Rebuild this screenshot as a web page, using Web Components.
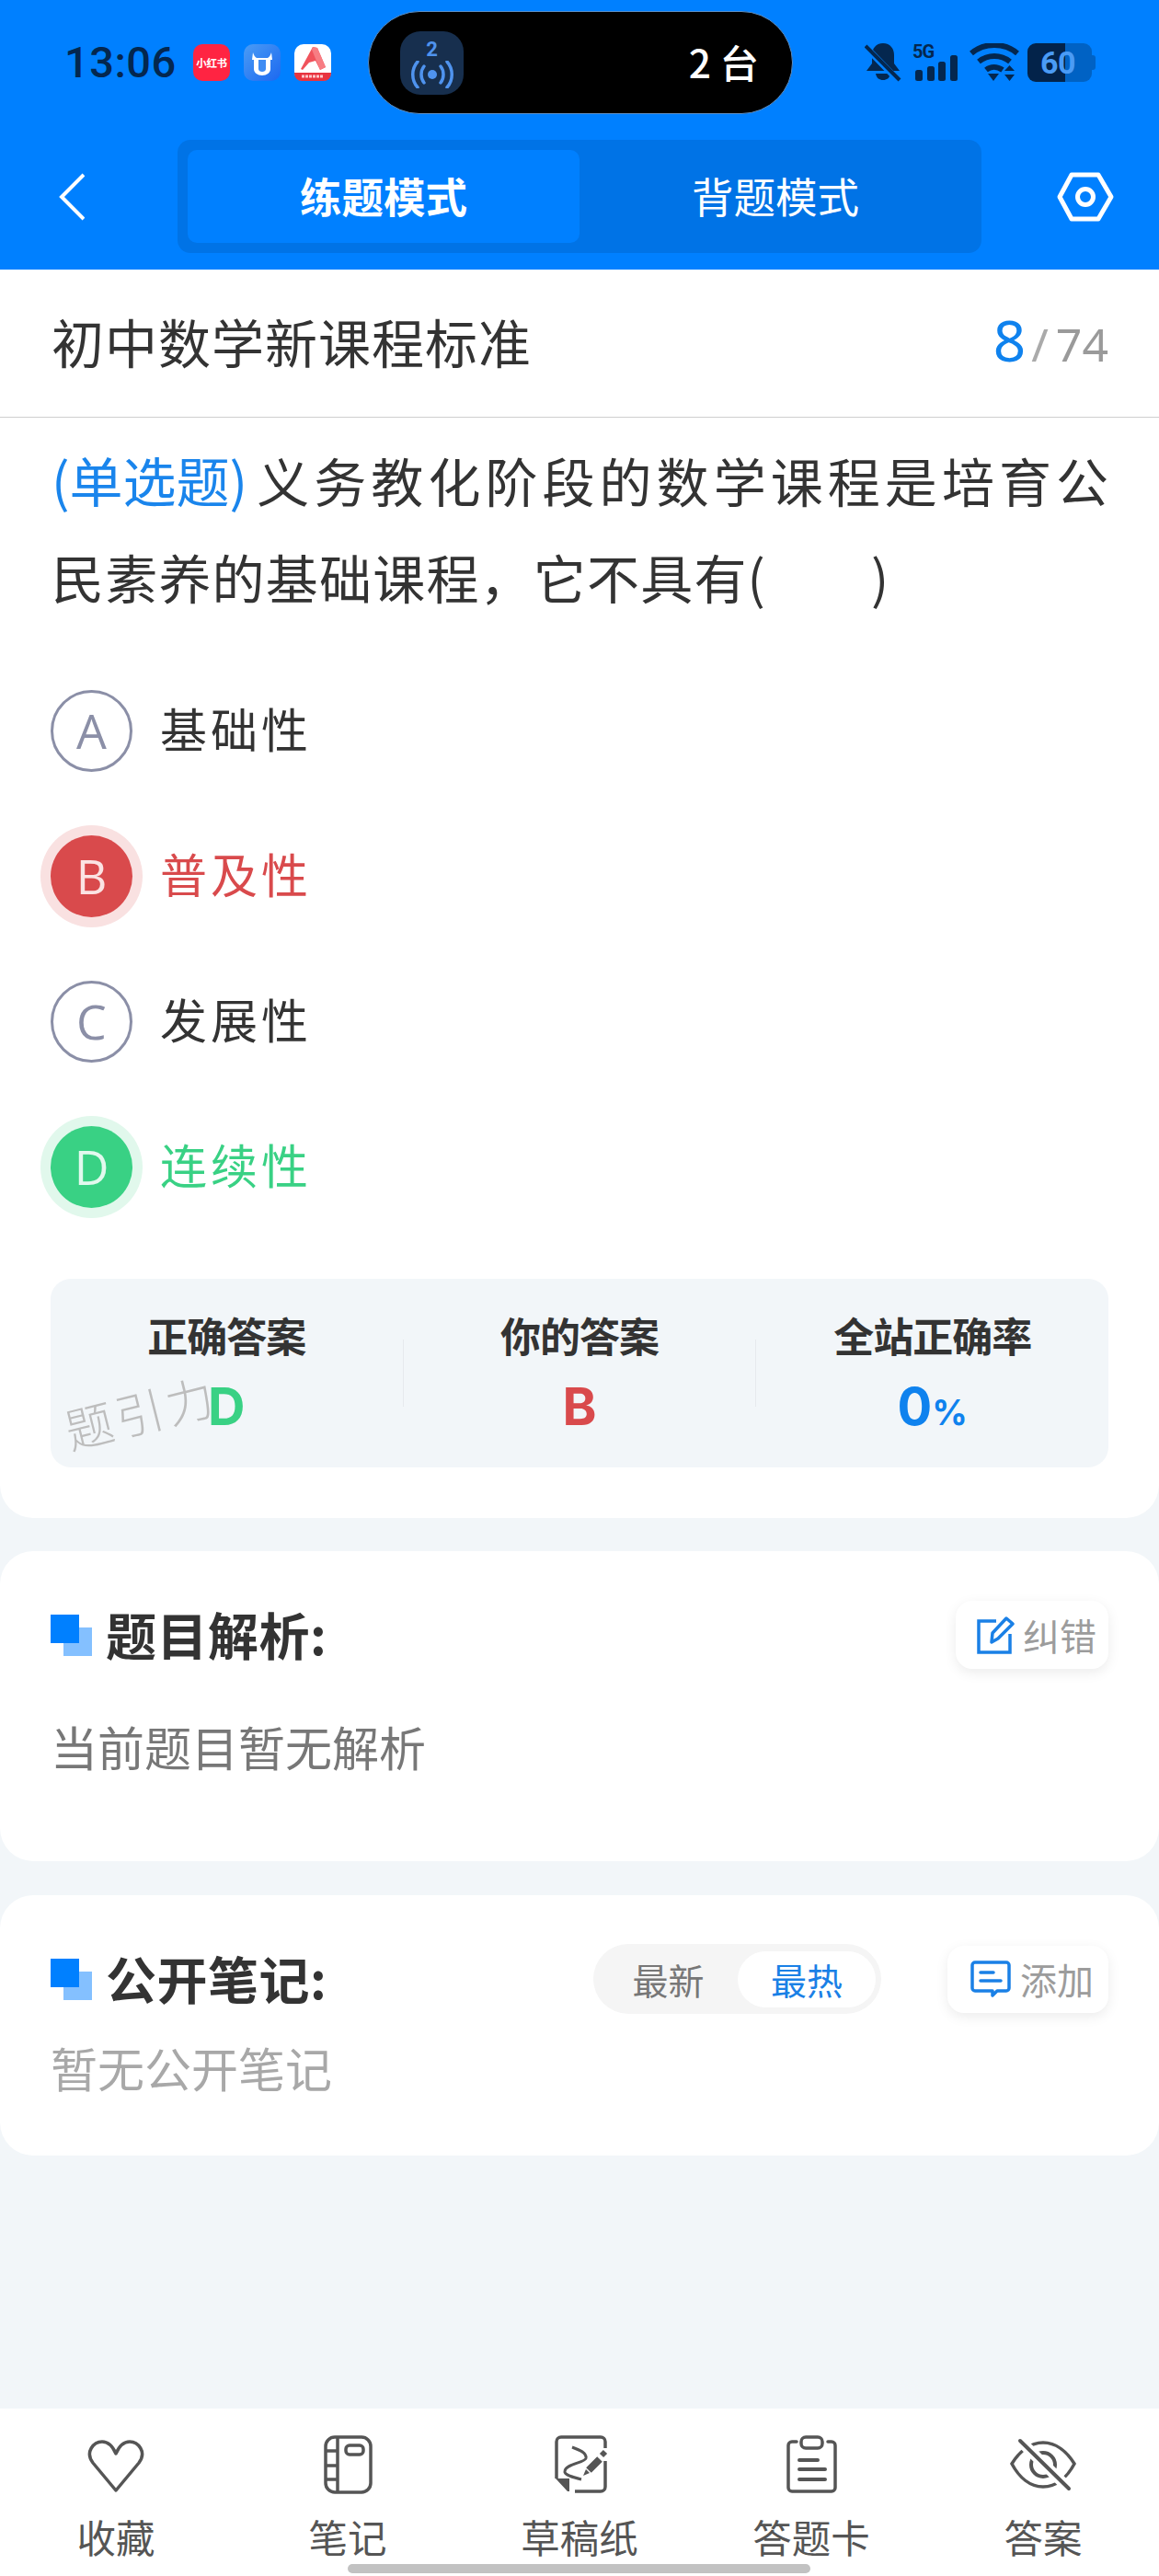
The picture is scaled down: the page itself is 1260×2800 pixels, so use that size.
<!DOCTYPE html>
<html lang="zh-CN"><head><meta charset="utf-8"><title>题目</title>
<style>
html,body{margin:0;padding:0;background:#f2f6f9}
body{font-family:"Noto Sans CJK SC","Noto Sans",sans-serif;color:#333}
</style></head>
<body>
<quiz-app></quiz-app>
<script>
function def(name, css, html, setup){
  customElements.define(name, class extends HTMLElement{
    connectedCallback(){
      if(this.shadowRoot) return;
      const r=this.attachShadow({mode:'open'});
      r.innerHTML='<style>'+css+'</style>'+(typeof html==='function'?html(this):html);
    }
  });
}
const CJK='"Noto Sans CJK SC","Noto Sans",sans-serif';

def('status-bar',`
:host{display:flex;align-items:center;height:137px;box-sizing:border-box;padding:0 0 1px 70px;color:#04274f;font-family:${CJK}}
.time{font:500 47px/60px Roboto,sans-serif;width:120px;letter-spacing:.5px;margin-right:20px;white-space:nowrap}
.apps{display:flex;gap:15px;margin-right:40px}
.apps>*{width:40px;height:40px;display:block}
.xhs{background:#ff2442;border-radius:10px;color:#fff;font:700 11.5px/40px ${CJK};text-align:center;white-space:nowrap;letter-spacing:-.3px}
.pill{width:462px;height:112px;box-sizing:border-box;border:1px solid #5d8fc4;border-radius:56px;background:#000;display:flex;align-items:center;padding:0 36px 3px 34px;margin-right:78px}
.live{width:69px;height:69px;border-radius:22px;background:#172f4e;display:flex;flex-direction:column;align-items:center;color:#4f93ee;font:700 22px/24px Roboto,sans-serif;padding-top:8px;box-sizing:border-box;margin-top:3px}
.n{margin-left:auto;color:#fff;font:500 42.5px/56px ${CJK}}
.s5{position:relative;width:50px;height:42px;margin:0 12px}
.g{position:absolute;left:0;top:-1px;font:700 20px/20px Roboto,sans-serif;letter-spacing:-1px;color:#04274f}
.bat{position:relative;width:70px;height:42px;border-radius:9px;background:linear-gradient(90deg,#03234a 0 41px,#0062c4 41px);margin-left:9px;color:#4a9bf5;font:700 34px/42px Roboto,sans-serif;text-align:center;padding-right:4px;box-sizing:border-box;letter-spacing:-.5px}
.nub{width:4px;height:16px;background:#0062c4;border-radius:0 3px 3px 0;}
.right{display:flex;align-items:center}
`,`
<div class="time">13:06</div>
<div class="apps">
 <div class="xhs">小红书</div>
 <svg viewBox="0 0 40 40"><defs><linearGradient id="g" x1="0" y1="0" x2="1" y2="1"><stop offset="0" stop-color="#4a9cf5"/><stop offset="1" stop-color="#1c68f0"/></linearGradient></defs><rect width="40" height="40" rx="10" fill="url(#g)"/><path d="M10 9c1 3 2 5 4 6h12c2-1 3-3 4-6l1 8h-2v10c0 4-4 7-9 7s-9-3-9-7V17H9z" fill="#fff"/><path d="M16 17h8v10c0 2-2 3-4 3s-4-1-4-3z" fill="#3f8cf3"/></svg>
 <svg viewBox="0 0 40 40"><rect width="40" height="40" rx="10" fill="#fff"/><path d="M0 31h40v1a8 8 0 0 1-8 8H8a8 8 0 0 1-8-8z" fill="#e8343f"/><path d="M7 27L20 3l5 1 9 21-6 3-5-10-7 2-7 8z" fill="#f0535c"/><path d="M20 3l5 1 9 21-6 3-9-22z" fill="#f77d83"/><path d="M8 35h24" stroke="#ffc7ca" stroke-width="3" stroke-dasharray="3 1"/></svg>
</div>
<div class="pill">
 <div class="live">2<svg width="48" height="30" viewBox="0 0 48 30" fill="none" stroke="#4f93ee" stroke-width="3.5" stroke-linecap="round"><circle cx="24" cy="15" r="5" fill="#4f93ee" stroke="none"/><path d="M15 6c-4 5-4 13 0 18M33 6c4 5 4 13 0 18M8 1c-7 8-7 20 0 28M40 1c7 8 7 20 0 28"/></svg></div>
 <div class="n">2 台</div>
</div>
<div class="right">
 <svg width="40" height="42" viewBox="0 0 40 42"><path d="M20 0c8 0 12 6 12 13v9l6 8H2l6-8v-9C8 6 12 0 20 0z" fill="#04274f"/><path d="M12 33h16c-1 5-4 7-8 7s-7-2-8-7z" fill="#04274f"/><path d="M2 5l35 36" stroke="#0080ff" stroke-width="7"/><path d="M1 3l37 37" stroke="#04274f" stroke-width="4"/></svg>
 <div class="s5"><span class="g">5G</span><svg width="50" height="42" viewBox="0 0 50 42" fill="#04274f" style="display:block"><rect x="3" y="29" width="8" height="12" rx="2.500"/><rect x="16" y="25" width="8" height="16" rx="2.500"/><rect x="28" y="20" width="8" height="21" rx="2.500"/><rect x="41" y="13" width="8" height="28" rx="2.500"/></svg></div>
 <svg width="54" height="42" viewBox="0 0 54 42" fill="none" stroke="#04274f" stroke-width="6"><path d="M2 11c14-12 36-12 50 0M10 20c10-8 24-8 34 0M18 29c5-4 12-4 18 0"/><path d="M20 33h12l-6 8z" fill="#04274f" stroke="none"/><path d="M38 30h11l-5.500-6zM38 34h11l-5.500 7z" fill="#04274f" stroke="none"/></svg>
 <div class="bat">60</div><div class="nub"></div>
</div>`);

def('nav-bar',`
:host{display:flex;align-items:center;height:156px;box-sizing:border-box;padding:15px 0 18px 64px}
svg{display:block;flex:none}
.seg{width:874px;height:123px;box-sizing:border-box;padding:11px;background:#0073e6;border-radius:14px;display:flex;margin:0 80px 0 101px}
.seg div{flex:1;display:flex;align-items:center;justify-content:center;color:#fff;font:400 45.5px/1 ${CJK};border-radius:10px;padding-bottom:1px}
.seg .on{background:#0080ff;font-weight:700}
`,`
<svg width="28" height="52" viewBox="0 0 28 52" fill="none" stroke="#fff" stroke-width="4"><path d="M27 2L3 26l24 24"/></svg>
<div class="seg"><div class="on">练题模式</div><div>背题模式</div></div>
<svg width="64" height="56" viewBox="0 0 64 56" fill="none" stroke="#fff" stroke-width="5" stroke-linejoin="round"><path d="M18 4h29l14 24-14 24H18L5 28z"/><circle cx="33" cy="28" r="8.500"/></svg>`);

def('paper-title',`
:host{display:flex;align-items:center;justify-content:space-between;height:161px;box-sizing:border-box;padding:0 55px 6px 56px;background:#fff;border-bottom:1px solid #cfcfcf}
.t{font:400 57px/1 ${CJK};color:#333;letter-spacing:1px}
.c{font-family:"Noto Sans",sans-serif;color:#9a9a9a;font-size:50px;line-height:1;display:flex;align-items:baseline;margin-top:-2px}
.c b{font-weight:400;font-size:62px;color:#0f82ee}
.c i{font-style:normal;margin:0 8px 0 6px;color:#aaa}
`,`<div class="t">初中数学新课程标准</div><div class="c"><b>8</b><i>/</i>74</div>`);

def('option-row',`
:host{display:flex;align-items:center;height:158px;padding-left:55px;color:#333}
.o{width:89px;height:89px;box-sizing:border-box;border:3px solid #8b8fa7;border-radius:50%;display:flex;align-items:center;justify-content:center;color:#8b8fa7;font:400 52px/1 "Open Sans",sans-serif;margin-right:30px;flex:none}
:host([state=wrong]){color:#d94a4c}
:host([state=right]){color:#39d184}
:host([state=wrong]) .o{background:#d94a4c;border:0;color:#fbe3e3;box-shadow:0 0 0 11px #f9e1e1}
:host([state=right]) .o{background:#39d184;border:0;color:#e2f9ee;box-shadow:0 0 0 11px #e1f8ec}
.x{font:400 51px/1 ${CJK};letter-spacing:4px;padding-bottom:5px}
`,e=>`<div class="o">${e.getAttribute('k')}</div><div class="x"><slot></slot></div>`);

def('stat-panel',`
:host{display:grid;position:relative;grid-template-columns:1fr 1px 1fr 1px 1fr;height:205px;margin:43px 55px 0;background:#f2f6f9;border-radius:22px;text-align:center}
.l{font:700 44px/48px ${CJK};color:#333;margin-top:37px;letter-spacing:-1px}
.v{font:700 56px/60px Inter,Roboto,sans-serif;margin-top:24px;position:relative}
.v small{font-size:38px}
.d{background:#e6e9ed;height:73px;margin-top:66px}
.wm{position:absolute;left:14px;top:112px;color:#bdbdbd;font:300 52px/64px ${CJK};transform:rotate(-14deg);letter-spacing:4px}
`,`
<div class="wm">题引力</div>
<div><div class="l">正确答案</div><div class="v" style="color:#39d184">D</div></div><div class="d"></div>
<div><div class="l">你的答案</div><div class="v" style="color:#d94a4c">B</div></div><div class="d"></div>
<div><div class="l">全站正确率</div><div class="v" style="color:#0f82ee">0<small>%</small></div></div>`);

def('question-card',`
:host{display:block;background:#fff;border-radius:0 0 36px 36px;padding:15px 0 55px}
.q{padding:0 55px 0 56px;font:400 57px/105px ${CJK};color:#333}
.l1{display:flex}
.tag{color:#1a85ec;font-size:58px;margin-right:10px;flex:none}
.rest{flex:1;text-align:justify;text-align-last:justify;text-justify:inter-character}
.l2{letter-spacing:1.2px}
.gap{display:inline-block;width:114px}
.opts{margin-top:36px}
`,`
<div class="q"><div class="l1"><span class="tag">(单选题)</span><span class="rest">义务教化阶段的数学课程是培育公</span></div>
<div class="l2">民素养的基础课程，它不具有(<span class="gap"></span>)</div></div>
<div class="opts">
<option-row k="A">基础性</option-row>
<option-row k="B" state="wrong">普及性</option-row>
<option-row k="C">发展性</option-row>
<option-row k="D" state="right">连续性</option-row>
</div>
<stat-panel></stat-panel>`);

def('section-head',`
:host{display:flex;align-items:center;gap:15px;font:700 55px/1 ${CJK};color:#333;letter-spacing:.5px}
.m{display:grid;width:45px;height:45px;flex:none}
.m i{grid-area:1/1;width:31px;height:31px;display:block}
.a{background:#84c0ff;margin:14px 0 0 14px}
.b{background:#0080ff}
.t{padding-bottom:4px}
`,`<div class="m"><i class="a"></i><i class="b"></i></div><div class="t"><slot></slot></div>`);

def('action-btn',`
:host{display:flex;align-items:center;box-sizing:border-box;height:74px;background:#fff;border-radius:18px;box-shadow:0 4px 14px rgba(0,0,0,.08);color:#9c9c9c;font:400 40px/1 ${CJK};gap:9px}
`,e=>`<slot name="i"></slot><slot></slot>`);

def('analysis-card',`
:host{display:block;background:#fff;border-radius:36px;margin-top:36px;padding:54px 55px 93px;height:337px;box-sizing:border-box}
.r{display:flex;align-items:center;justify-content:space-between}
action-btn{width:166px;padding-left:22px}
svg{display:block;flex:none}
.t{margin-top:54px;font:400 51px/60px ${CJK};color:#777}
`,`<div class="r"><section-head>题目解析:</section-head>
<action-btn><svg slot="i" width="42" height="42" viewBox="0 0 42 42" fill="none" stroke="#1a80e6" stroke-width="3.500"><path d="M22 6H3v34h34V20"/><path d="M17 29l1-10L33 3l7 6-16 16z" stroke-linejoin="round"/></svg>纠错</action-btn></div>
<div class="t">当前题目暂无解析</div>`);

def('notes-card',`
:host{display:block;background:#fff;border-radius:36px;margin-top:37px;padding:53px 55px 63px;height:283px;box-sizing:border-box}
.r{display:flex;align-items:center;height:76px}
.tg{margin-left:auto;width:313px;height:76px;box-sizing:border-box;background:#f5f5f5;border-radius:38px;padding:8px 6px 7px;display:flex;margin-right:72px;font:400 39px/1 ${CJK};color:#777}
.tg div{display:flex;align-items:center;justify-content:center}
.tg .a{width:151px}
.tg .b{width:150px;background:#fff;border-radius:31px;color:#1a80e6}
action-btn{width:175px;padding-left:25px;height:73px}
action-btn svg{margin-right:1px}
svg{display:block;flex:none}
.t{margin-top:28px;font:400 51px/60px ${CJK};color:#a8a8a8}
`,`<div class="r"><section-head>公开笔记:</section-head>
<div class="tg"><div class="a">最新</div><div class="b">最热</div></div>
<action-btn><svg slot="i" width="44" height="40" viewBox="0 0 44 40" fill="none" stroke="#1a80e6" stroke-width="3.500" stroke-linejoin="round"><path d="M5 2h34a3 3 0 0 1 3 3v25a3 3 0 0 1-3 3H29l-5 5v-5H5a3 3 0 0 1-3-3V5a3 3 0 0 1 3-3z"/><path d="M11 13h14M11 22h22" stroke-linecap="round"/></svg>添加</action-btn></div>
<div class="t">暂无公开笔记</div>`);

def('tab-item',`
:host{flex:1;display:flex;flex-direction:column;align-items:center;color:#555;font:400 42.5px/1 ${CJK}}
.i{height:64px;display:flex;justify-content:center}
.t{margin-top:25px;line-height:42px}
`,`<div class="i"><slot name="i"></slot></div><div class="t"><slot></slot></div>`);

def('tab-bar',`
:host{display:flex;height:182px;box-sizing:border-box;padding-top:29px;background:#fff;position:relative}
svg{display:block}
.h{position:absolute;left:378px;top:169px;width:503px;height:10px;border-radius:5px;background:#c2c2c2}
`,`
<tab-item><svg slot="i" width="64" height="64" viewBox="0 0 64 64" fill="none" stroke="#555" stroke-width="3.500" stroke-linejoin="round"><path d="M32 60L7 30C-2 18 8 7 17 7c7 0 12 6 15 13C35 13 40 7 47 7c9 0 19 11 10 23z"/></svg>收藏</tab-item>
<tab-item><svg slot="i" width="64" height="64" viewBox="0 0 64 64" fill="none" stroke="#555" stroke-width="3.500"><rect x="8" y="2" width="49" height="60" rx="10"/><path d="M21 2v60M8 17h13M8 33h13M8 48h13"/><rect x="30" y="11" width="19" height="10" rx="4"/></svg>笔记</tab-item>
<tab-item><svg slot="i" width="64" height="64" viewBox="0 0 64 64" fill="none" stroke="#555" stroke-width="3.500"><path d="M7 47V7a5 5 0 0 1 5-5h43a5 5 0 0 1 5 5v7M60 28v28a5 5 0 0 1-5 5H27"/><path d="M6 47h15v14h-2z" fill="#555" stroke="none"/><path d="M24 13c8 3 16 6 15 12-1 5-22 6-23 14-1 4 10 7 18 9" stroke-width="3"/><path d="M42 38l12-12" stroke-width="8"/><path d="M36 44l3-7 4 4z" fill="#555" stroke="none"/><path d="M56 22l4-4" stroke-width="6"/></svg>草稿纸</tab-item>
<tab-item><svg slot="i" width="64" height="64" viewBox="0 0 64 64" fill="none" stroke="#555" stroke-width="3.500" stroke-linecap="round"><path d="M16 7h-5a4 4 0 0 0-4 4v46a4 4 0 0 0 4 4h43a4 4 0 0 0 4-4V11a4 4 0 0 0-4-4h-4"/><rect x="21" y="2" width="23" height="12" rx="5"/><path d="M19 27h20M19 37h28M19 48h28" stroke-width="4"/></svg>答题卡</tab-item>
<tab-item><svg slot="i" width="72" height="64" viewBox="0 0 72 64" fill="none" stroke="#555" stroke-width="3.500"><path d="M36 8c14 0 26 10 34 23-8 15-20 25-34 25S10 46 2 31C10 18 22 8 36 8z"/><circle cx="36" cy="32" r="13" stroke-width="4"/><path d="M11 6l53 52" stroke="#fff" stroke-width="12"/><path d="M11 6l53 52" stroke-width="4" stroke-linecap="round"/></svg>答案</tab-item>
<div class="h"></div>`);

def('quiz-app',`
:host{display:flex;flex-direction:column;width:1260px;height:2800px;background:#f2f6f9;overflow:hidden}
.top{background:#0080ff}
.sp{flex:1}
`,`<div class="top"><status-bar></status-bar><nav-bar></nav-bar></div>
<paper-title></paper-title>
<question-card></question-card>
<analysis-card></analysis-card>
<notes-card></notes-card>
<div class="sp"></div>
<tab-bar></tab-bar>`);
</script>
</body></html>
